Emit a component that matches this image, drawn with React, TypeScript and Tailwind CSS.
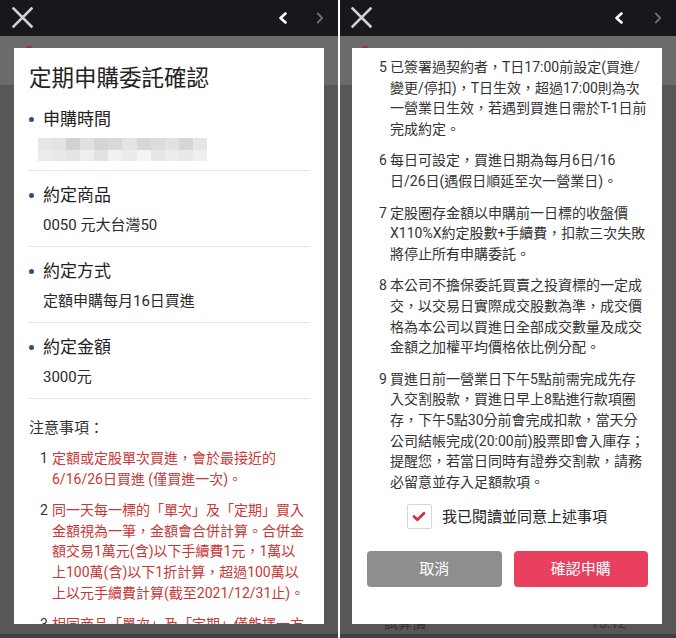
import React from "react";

const FONT = "font-['Roboto','Noto_Sans_CJK_TC',sans-serif]";

function Header({ padL, padR, gapChev }: { padL: string; padR: string; gapChev: string }) {
  return (
    <div className={`h-[36px] bg-[#16181b] flex items-center justify-between shrink-0 ${padL} ${padR}`}>
      <svg width="21" height="21" viewBox="0 0 21 21" className="-mt-[1px]">
        <path d="M1.5 1.5 L19.5 19.5 M19.5 1.5 L1.5 19.5" stroke="#d2d2d2" strokeWidth="2.6" strokeLinecap="square" />
      </svg>
      <div className={`flex items-center ${gapChev}`}>
        <svg width="10" height="12" viewBox="0 0 10 12">
          <path d="M7.5 1.5 L2.5 6 L7.5 10.5" stroke="#ffffff" strokeWidth="2.6" fill="none" strokeLinecap="round" strokeLinejoin="round" />
        </svg>
        <svg width="8" height="12" viewBox="0 0 8 12">
          <path d="M1.8 1.5 L6.2 6 L1.8 10.5" stroke="#6e6e70" strokeWidth="1.8" fill="none" strokeLinecap="round" strokeLinejoin="round" />
        </svg>
      </div>
    </div>
  );
}

function Backdrop({ markPad, bottomText }: { markPad: string; bottomText?: boolean }) {
  return (
    <div className="flex-1 flex flex-col bg-[#575757]">
      <div className={`h-[49px] bg-[#6b6b6b] pt-[10px] ${markPad}`}>
        <div className="w-[6px] h-[6px] bg-[#8e3b3b]" />
      </div>
      <div className="flex-1" />
      <div className="h-[18px] flex items-start justify-between pl-[44px] pr-[50px]">
        {bottomText ? (
          <>
            <span className="text-[14px] leading-[14px] text-[#333]">試算價</span>
            <span className="text-[14px] leading-[14px] text-[#333]">15.12</span>
          </>
        ) : null}
      </div>
      <div className="h-[4px] bg-[#404040]" />
    </div>
  );
}

const blurTop = ["#e6e6e6", "#e3e3e3", "#d2d2d2", "#e0e0e0", "#d5d5d5", "#d9d9d9", "#e4e4e4", "#d7d7d7", "#dcdcdc", "#e2e2e2", "#d6d6d6", "#e5e5e5"];
const blurBot = ["#ececec", "#e8e8e8", "#e4e4e4", "#eeeeee", "#e2e2e2", "#f1f1f1", "#ebebeb", "#f4f4f4", "#e7e7e7", "#ededed", "#e9e9e9", "#efefef"];

function Blur() {
  return (
    <div className="ml-[10px] w-[169px] h-[23px] flex flex-col">
      <div className="flex h-[12px]">
        {blurTop.map((c, i) => (
          <div key={i} className="flex-1" style={{ background: c }} />
        ))}
      </div>
      <div className="flex h-[11px]">
        {blurBot.map((c, i) => (
          <div key={i} className="flex-1" style={{ background: c }} />
        ))}
      </div>
    </div>
  );
}

function Field({ label, first, children }: { label: string; first?: boolean; children: React.ReactNode }) {
  return (
    <div className={`${first ? "pt-[14px]" : "pt-[12px]"} pb-[10px] border-b border-[#e4e4e4]`}>
      <div className="h-[24px] flex items-center">
        <div className="w-[5px] h-[5px] rounded-full bg-[#2b4d8a] ml-[1px]" />
        <span className="ml-[9px] text-[17px] leading-[24px] text-[#222]">{label}</span>
      </div>
      <div className="mt-[7px] h-[22px] flex items-center">{children}</div>
    </div>
  );
}

function Value({ children }: { children: React.ReactNode }) {
  return <span className="pl-[15px] text-[15px] leading-[22px] text-[#2a2a2a] whitespace-nowrap">{children}</span>;
}

function Note({ n, lines, red, numW }: { n: string; lines: string[]; red?: boolean; numW: string }) {
  return (
    <div className="flex text-[14px] leading-[20.6px]">
      <div className={`${numW} shrink-0 text-[#333]`}>{n}</div>
      <div className={red ? "text-[#c93838]" : "text-[#333]"}>
        {lines.map((l, i) => (
          <div key={i} className="whitespace-nowrap">{l}</div>
        ))}
      </div>
    </div>
  );
}

function LeftPanel() {
  return (
    <div className="w-[338px] h-full flex flex-col relative overflow-hidden">
      <Header padL="pl-[12px]" padR="pr-[14px]" gapChev="gap-[28px]" />
      <Backdrop markPad="pl-[26px]" />
      <div className="absolute left-[14px] top-[48px] w-[310px] h-[576px] bg-white overflow-hidden px-[14px]">
        <div className="pt-[15px] text-[22.5px] leading-[30px] text-[#222] pl-[1px] whitespace-nowrap">定期申購委託確認</div>
        <Field label="申購時間" first>
          <Blur />
        </Field>
        <Field label="約定商品">
          <Value>0050 元大台灣50</Value>
        </Field>
        <Field label="約定方式">
          <Value>定額申購每月16日買進</Value>
        </Field>
        <Field label="約定金額">
          <Value>3000元</Value>
        </Field>
        <div className="mt-[18px] pl-[1px] text-[15px] leading-[22px] text-[#333]">注意事項：</div>
        <div className="mt-[9px] ml-[12px] flex flex-col gap-[11px]">
          <Note n="1" red numW="w-[12px]" lines={["定額或定股單次買進，會於最接近的", "6/16/26日買進 (僅買進一次)。"]} />
          <Note
            n="2"
            red
            numW="w-[12px]"
            lines={[
              "同一天每一標的「單次」及「定期」買入",
              "金額視為一筆，金額會合併計算。合併金",
              "額交易1萬元(含)以下手續費1元，1萬以",
              "上100萬(含)以下1折計算，超過100萬以",
              "上以元手續費計算(截至2021/12/31止)。",
            ]}
          />
          <Note n="3" red numW="w-[12px]" lines={["相同商品「單次」及「定期」僅能擇一方", "式申購。"]} />
        </div>
      </div>
    </div>
  );
}

function RightPanel() {
  return (
    <div className="w-[336px] h-full flex flex-col relative overflow-hidden">
      <Header padL="pl-[11px]" padR="pr-[14px]" gapChev="gap-[30px]" />
      <Backdrop markPad="pl-[22px]" bottomText />
      <div className="absolute left-[12px] top-[48px] w-[310px] h-[576px] bg-white overflow-hidden">
        <div className="pt-[9px] pl-[27px] flex flex-col gap-[11px]">
          <Note
            n="5"
            numW="w-[11px]"
            lines={["已簽署過契約者，T日17:00前設定(買進/", "變更/停扣)，T日生效，超過17:00則為次", "一營業日生效，若遇到買進日需於T-1日前", "完成約定。"]}
          />
          <Note n="6" numW="w-[11px]" lines={["每日可設定，買進日期為每月6日/16", "日/26日(遇假日順延至次一營業日)。"]} />
          <Note n="7" numW="w-[11px]" lines={["定股圈存金額以申購前一日標的收盤價", "X110%X約定股數+手續費，扣款三次失敗", "將停止所有申購委託。"]} />
          <Note
            n="8"
            numW="w-[11px]"
            lines={["本公司不擔保委託買賣之投資標的一定成", "交，以交易日實際成交股數為準，成交價", "格為本公司以買進日全部成交數量及成交", "金額之加權平均價格依比例分配。"]}
          />
          <Note
            n="9"
            numW="w-[11px]"
            lines={[
              "買進日前一營業日下午5點前需完成先存",
              "入交割股款，買進日早上8點進行款項圈",
              "存，下午5點30分前會完成扣款，當天分",
              "公司結帳完成(20:00前)股票即會入庫存；",
              "提醒您，若當日同時有證券交割款，請務",
              "必留意並存入足額款項。",
            ]}
          />
        </div>
        <div className="mt-[12px] flex items-center justify-center gap-[10px]">
          <div className="w-[25px] h-[25px] border border-[#d6d6d6] rounded-[2px] bg-white flex items-center justify-center">
            <svg width="14" height="11" viewBox="0 0 14 11">
              <path d="M2 5.6 L5.4 8.8 L12 2.2" stroke="#c9334d" strokeWidth="2.8" fill="none" strokeLinecap="round" strokeLinejoin="round" />
            </svg>
          </div>
          <span className="text-[15px] leading-[22px] text-[#222] whitespace-nowrap">我已閱讀並同意上述事項</span>
        </div>
        <div className="mt-[22px] pl-[15px] pr-[14px] flex gap-[12px]">
          <button className="flex-1 h-[36px] rounded-[4px] bg-[#8e8e8e] text-white text-[15px]">取消</button>
          <button className="flex-1 h-[36px] rounded-[4px] bg-[#e9405f] text-white text-[15px]">確認申購</button>
        </div>
      </div>
    </div>
  );
}

export default function App() {
  return (
    <div className={`w-[676px] h-[638px] bg-white flex gap-[2px] overflow-hidden ${FONT}`}>
      <LeftPanel />
      <RightPanel />
    </div>
  );
}
